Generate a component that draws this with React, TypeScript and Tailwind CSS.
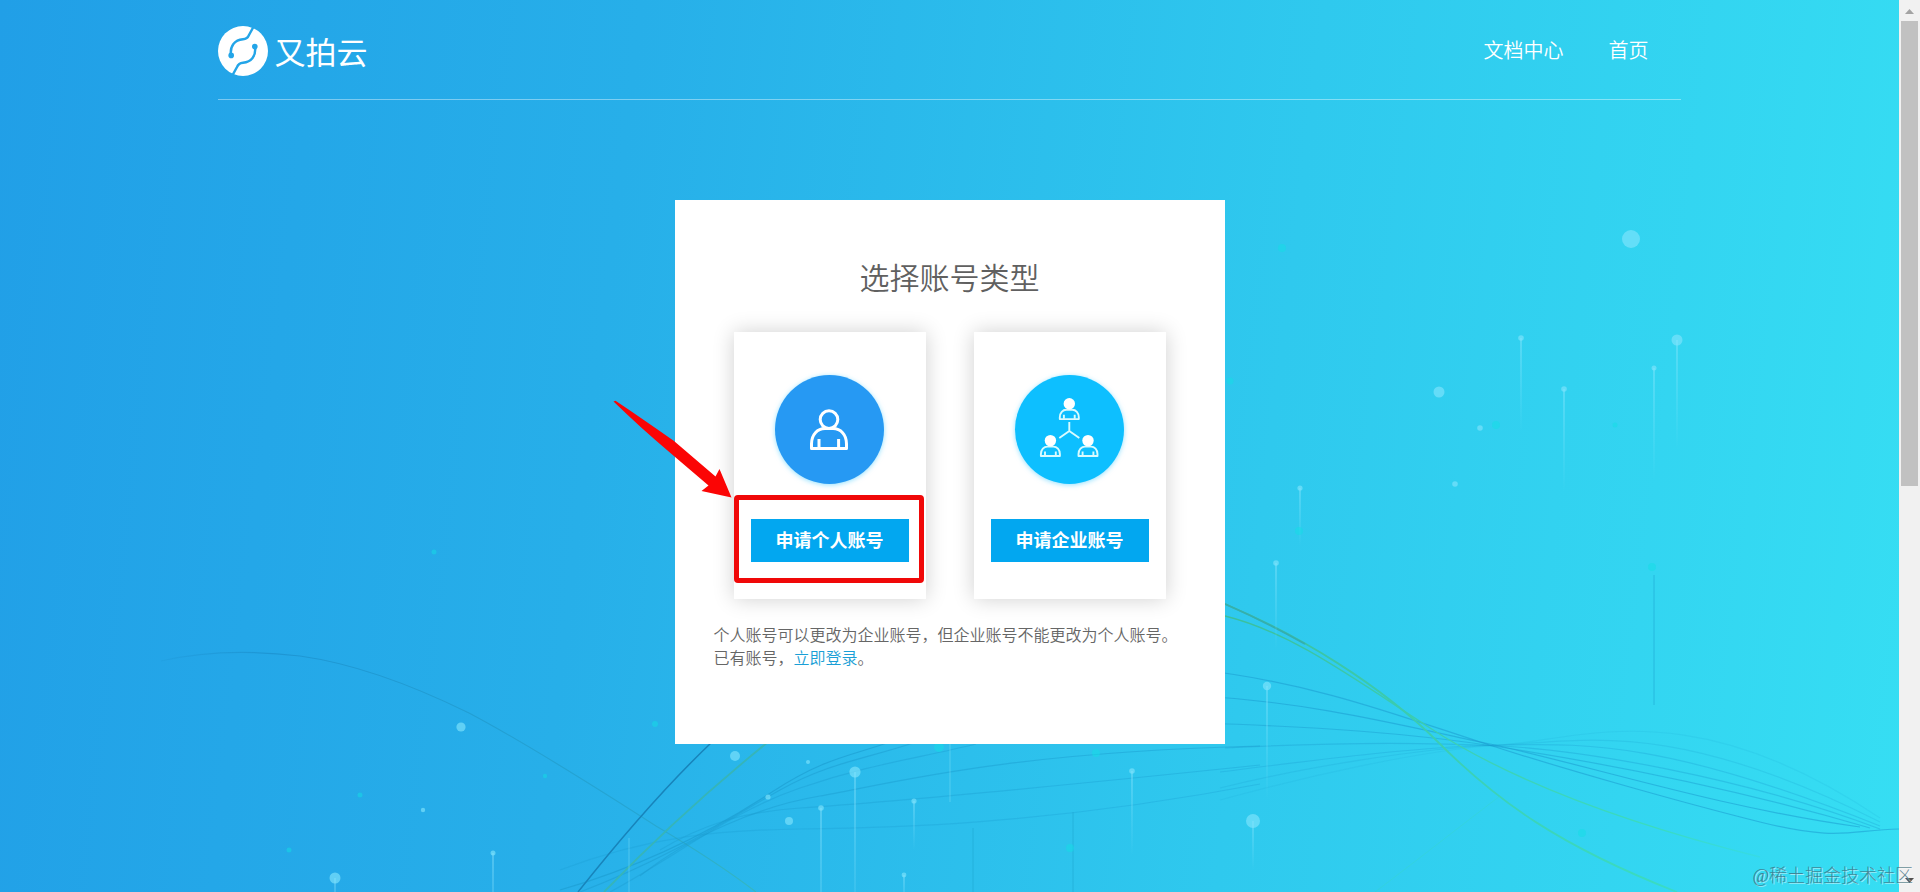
import React from 'react';

type Dot = { x: number; y: number; r: number; tail?: number; tone?: 'light' | 'teal' };

const DOTS: Dot[] = [
  { x: 1631, y: 239, r: 9 },
  { x: 1282, y: 248, r: 4, tone: 'teal' },
  { x: 1677, y: 340, r: 5.5, tail: 450 },
  { x: 1521, y: 338, r: 2.8, tail: 432 },
  { x: 1654, y: 368, r: 2.5, tail: 480 },
  { x: 1564, y: 389, r: 2.8, tail: 492 },
  { x: 1439, y: 392, r: 5.5 },
  { x: 1480, y: 428, r: 2.8 },
  { x: 1496, y: 425, r: 4, tone: 'teal' },
  { x: 1615, y: 425, r: 2.5, tone: 'teal' },
  { x: 1455, y: 484, r: 2.8 },
  { x: 1300, y: 488, r: 2.6, tail: 546 },
  { x: 1299, y: 531, r: 4, tone: 'teal' },
  { x: 1276, y: 563, r: 2.8, tail: 650 },
  { x: 1267, y: 686, r: 4.2, tail: 800 },
  { x: 1253, y: 821, r: 7, tail: 870 },
  { x: 1652, y: 567, r: 4, tone: 'teal' },
  { x: 1582, y: 833, r: 4, tone: 'teal' },
  { x: 1230, y: 381, r: 3.5, tone: 'teal' },
  { x: 461, y: 727, r: 4.6 },
  { x: 335, y: 878, r: 5.5, tail: 920 },
  { x: 423, y: 810, r: 2.2 },
  { x: 360, y: 795, r: 2.5, tone: 'teal' },
  { x: 434, y: 552, r: 2.5, tone: 'teal' },
  { x: 545, y: 776, r: 2.2, tone: 'teal' },
  { x: 289, y: 850, r: 2.5, tone: 'teal' },
  { x: 655, y: 724, r: 3, tone: 'teal' },
  { x: 493, y: 853, r: 2.5, tail: 960 },
  { x: 735, y: 756, r: 5 },
  { x: 855, y: 772, r: 5.6, tail: 960 },
  { x: 821, y: 808, r: 2.8, tail: 990 },
  { x: 768, y: 797, r: 2.6 },
  { x: 789, y: 821, r: 4 },
  { x: 914, y: 801, r: 2.6, tail: 850 },
  { x: 808, y: 762, r: 2 },
  { x: 939, y: 747, r: 5, tone: 'teal' },
  { x: 1096, y: 753, r: 4, tone: 'teal' },
  { x: 1132, y: 771, r: 2.8, tail: 856 },
  { x: 1070, y: 848, r: 4, tone: 'teal' },
  { x: 904, y: 875, r: 2.4, tail: 910 },
];

type Wave = { d: string; opacity: number };

const WAVES: Wave[] = [
  { d: 'M1200 670C1310 682 1400 716 1480 742S1680 802 1760 822S1850 830 1899 829', opacity: 0.55 },
  { d: 'M1200 696C1310 702 1400 725 1490 744S1720 808 1860 827', opacity: 0.55 },
  { d: 'M1200 723C1320 727 1410 733 1500 747S1720 784 1870 828', opacity: 0.45 },
  { d: 'M1225 748C1320 743 1420 742 1500 746S1740 776 1880 829', opacity: 0.35 },
  { d: 'M1220 772C1300 762 1420 746 1500 745S1660 738 1880 826', opacity: 0.3 },
  { d: 'M1220 788C1300 768 1420 748 1500 745S1670 716 1880 822', opacity: 0.2 },
  { d: 'M1220 800C1300 778 1420 750 1500 745S1690 690 1880 818', opacity: 0.12 },
  { d: 'M560 890C650 864 720 826 772 792S850 756 890 742', opacity: 0.6 },
  { d: 'M580 892C670 858 730 818 780 790S870 758 916 742', opacity: 0.5 },
  { d: 'M610 892C680 854 730 812 800 788S920 758 976 744', opacity: 0.4 },
  { d: 'M640 876C690 836 760 806 820 796S1000 752 1260 746', opacity: 0.45 },
  { d: 'M660 850C700 826 740 812 800 808S1020 790 1260 765', opacity: 0.35 },
  { d: 'M560 870C650 836 720 830 800 829S1040 826 1260 784', opacity: 0.3 },
];

function Backdrop() {
  return (
    <svg
      className="absolute inset-0 h-full w-full"
      viewBox="0 0 1899 892"
      preserveAspectRatio="xMidYMin slice"
      fill="none"
      aria-hidden="true"
    >
      <defs>
        <linearGradient id="tail" x1="0" y1="0" x2="0" y2="1">
          <stop offset="0" stopColor="#9ceaff" stopOpacity="0.45" />
          <stop offset="1" stopColor="#9ceaff" stopOpacity="0" />
        </linearGradient>
        <linearGradient id="arc" gradientUnits="userSpaceOnUse" x1="150" y1="0" x2="760" y2="0">
          <stop offset="0" stopColor="#1787c4" stopOpacity="0.1" />
          <stop offset="0.2" stopColor="#1787c4" stopOpacity="0.55" />
          <stop offset="0.8" stopColor="#2199bd" stopOpacity="0.5" />
          <stop offset="1" stopColor="#3cb7a4" stopOpacity="0.6" />
        </linearGradient>
        <linearGradient id="green" gradientUnits="userSpaceOnUse" x1="1225" y1="0" x2="1760" y2="0">
          <stop offset="0" stopColor="#3abf9c" />
          <stop offset="0.5" stopColor="#3bd2b8" />
          <stop offset="0.8" stopColor="#3adbc0" />
          <stop offset="1" stopColor="#38dcd0" stopOpacity="0.4" />
        </linearGradient>
      </defs>
      <path
        d="M161 661C200 652 250 650 300 656C350 663 410 684 469 713C520 740 600 790 656 826C700 852 730 872 756 892"
        stroke="url(#arc)"
        strokeWidth="1.2"
      />
      {WAVES.map((wave) => (
        <path key={wave.d} d={wave.d} stroke="#1b9bcf" strokeOpacity={wave.opacity} strokeWidth="1.2" />
      ))}
      <path d="M712 742C672 780 632 824 578 892" stroke="#1784bb" strokeWidth="1.5" />
      <path d="M768 742C716 784 664 830 604 892" stroke="#36b5b8" strokeWidth="1.8" />
      <path d="M1225 604C1300 636 1380 684 1439 743S1560 846 1677 892" stroke="url(#green)" strokeWidth="1.8" />
      <path d="M1225 616C1290 632 1350 676 1430 728S1620 822 1760 857" stroke="url(#green)" strokeWidth="1.4" />
      <path d="M1225 604C1250 615 1280 630 1305 644" stroke="#35aeae" strokeWidth="1.8" />
      <path d="M1375 892C1420 858 1450 834 1500 796" stroke="#38d6c8" strokeOpacity="0.4" />
      <path d="M1654 575V705M973 828V892M1073 812V892" stroke="#1fa9d2" strokeOpacity="0.6" />
      <path d="M950 744V802M629 838V892" stroke="#8fe6fb" strokeOpacity="0.4" />
      {DOTS.map((p) => (
        <g key={`${p.x}-${p.y}`}>
          {p.tail ? (
            <rect x={p.x - 0.8} y={p.y} width="1.6" height={p.tail - p.y} fill="url(#tail)" />
          ) : null}
          <circle
            cx={p.x}
            cy={p.y}
            r={p.r}
            fill={p.tone === 'teal' ? '#14dde6' : '#7fe3fc'}
            fillOpacity={p.tone === 'teal' ? 0.5 : 0.65}
          />
        </g>
      ))}
    </svg>
  );
}

function LogoMark() {
  return (
    <svg className="size-[50px]" viewBox="0 0 50 50" fill="none" aria-hidden="true">
      <circle cx="25" cy="25" r="25" fill="#fff" />
      <g stroke="#23a5e8" strokeWidth="2.4" strokeLinecap="round">
        <path d="M36.5 -1L31 9C30 11.500 28 13 25 13.300C16.500 14 12 20 12.800 29" />
        <path d="M13.500 51L19 41C20 38.500 22 37 25 36.700C33.500 36 38 30 37.200 21" />
      </g>
      <circle cx="13.2" cy="29.4" r="2.8" fill="#23a5e8" />
      <circle cx="36.8" cy="20.6" r="2.8" fill="#23a5e8" />
    </svg>
  );
}

function PersonIcon() {
  return (
    <svg className="size-full" viewBox="0 0 109 109" fill="none" stroke="#fff" strokeWidth="3" aria-hidden="true">
      <circle cx="54" cy="44.6" r="8.800" />
      <path d="M36.500 73.600V69C36.500 59.500 42.500 53.600 50 53.600H58C65.500 53.600 71.500 59.500 71.500 69V73.600Z" strokeLinejoin="round" />
      <path d="M44 64V73M63.600 64V73" />
    </svg>
  );
}

function TeamIcon() {
  const people = [
    [54.3, 28.7],
    [35.4, 65.6],
    [73, 65.6],
  ];
  return (
    <svg className="size-full" viewBox="0 0 109 109" fill="none" stroke="#d9fbff" strokeWidth="1.9" aria-hidden="true">
      {people.map(([x, y]) => (
        <g key={`${x}-${y}`} transform={`translate(${x} ${y})`}>
          <path d="M-9.500 15.400V13.500C-9.500 9 -6.500 6 -3 6H3C6.500 6 9.500 9 9.500 13.500V15.400Z" strokeLinejoin="round" />
          <path d="M-5.400 11V15M5.400 11V15" />
          <circle r="5.700" fill="#fff" stroke="none" />
        </g>
      ))}
      <path d="M54.300 47V56L44.300 63M54.300 56L64.300 63" />
    </svg>
  );
}

function Arrow() {
  return (
    <svg
      className="pointer-events-none absolute -left-[124px] top-[65px] h-[104px] w-[124px]"
      viewBox="0 0 124 104"
      aria-hidden="true"
    >
      <path
        d="M3.500 4.500L5.500 3.800C24 16 44 30 64 44L105.500 79.500L109.500 72L121.500 100.500L91.500 94L98.500 88.500L61 56.500C40 39 21 21 3.500 4.500Z"
        fill="#fb0505"
      />
    </svg>
  );
}

function AccountOption(props: { label: string; circle: string; icon: React.ReactNode; marked?: boolean }) {
  return (
    <section className="relative flex w-[192px] flex-col items-center bg-white pt-[43px] pb-[37px] shadow-[0_0_20px_rgba(0,0,0,0.19)]">
      <div className={`size-[109px] rounded-full ${props.circle}`}>{props.icon}</div>
      <button
        type="button"
        className="mt-[35px] h-[43px] w-[158px] cursor-pointer bg-[#02a7f0] pb-[3px] text-lg font-bold text-white"
      >
        {props.label}
      </button>
      {props.marked ? (
        <>
          <div className="pointer-events-none absolute left-0 top-[163px] h-[88px] w-[190px] rounded-[4px] border-5 border-[#f00808]" />
          <Arrow />
        </>
      ) : null}
    </section>
  );
}

function ScrollRail() {
  return (
    <div className="relative flex w-[21px] shrink-0 flex-col items-center bg-[#f1f1f1]" aria-hidden="true">
      <svg className="h-[21px] w-[17px] shrink-0" viewBox="0 0 17 21">
        <path d="M4 14L8.500 9L13 14Z" fill="#a3a3a3" />
      </svg>
      <div className="h-[465px] w-[17px] bg-[#c1c1c1]" />
      <svg className="mt-auto h-[21px] w-[17px] shrink-0" viewBox="0 0 17 21">
        <path d="M4 7L8.500 12L13 7Z" fill="#505050" />
      </svg>
    </div>
  );
}

export default function App() {
  return (
    <div className="relative flex min-h-screen font-['Noto_Sans_CJK_SC',sans-serif]">
      <div className="relative flex-1 overflow-hidden bg-linear-[97deg,#219fe7_0%,#27afe9_32%,#2fc9ee_66%,#36def3_100%]">
        <Backdrop />
        <div className="relative flex flex-col items-center">
          <header className="flex h-[100px] w-[77%] items-center justify-between border-b border-white/40">
            <a href="#home" className="flex items-center gap-[6px] pt-[3px] text-white" aria-label="又拍云">
              <LogoMark />
              <span className="text-[31px] leading-[40px] font-normal">又拍云</span>
            </a>
            <nav className="mr-[32px] flex gap-[45px] text-xl font-[350] text-white">
              <a href="#docs">文档中心</a>
              <a href="#home">首页</a>
            </nav>
          </header>
          <main className="mt-[100px] w-[550px] bg-white pt-[58px] pb-[75px]">
            <h1 className="text-center text-3xl leading-[36px] font-[350] text-[#606060]">选择账号类型</h1>
            <div className="mt-[38px] flex justify-center gap-12">
              <AccountOption
                label="申请个人账号"
                circle="bg-[#2699f3] shadow-[0_1px_5px_rgba(60,200,255,0.55)]"
                icon={<PersonIcon />}
                marked
              />
              <AccountOption
                label="申请企业账号"
                circle="bg-[#0dbfff] shadow-[0_1px_5px_rgba(60,200,255,0.55)]"
                icon={<TeamIcon />}
              />
            </div>
            <div className="mt-[24px] px-[39px] text-base leading-[23px] font-[350] text-[#666]">
              <p className="whitespace-nowrap">个人账号可以更改为企业账号，但企业账号不能更改为个人账号。</p>
              <p>
                已有账号，
                <a href="#login" className="text-[#1a9fd6]">立即登录</a>。
              </p>
            </div>
          </main>
        </div>
      </div>
      <ScrollRail />
      <div className="pointer-events-none absolute right-[7px] bottom-[3px] font-['Liberation_Serif','Noto_Sans_CJK_SC',serif] text-lg leading-[26px] font-light text-[#3f6f80]/80 [text-shadow:1px_1px_0_rgba(255,255,255,0.5)]">
        @稀土掘金技术社区
      </div>
    </div>
  );
}
